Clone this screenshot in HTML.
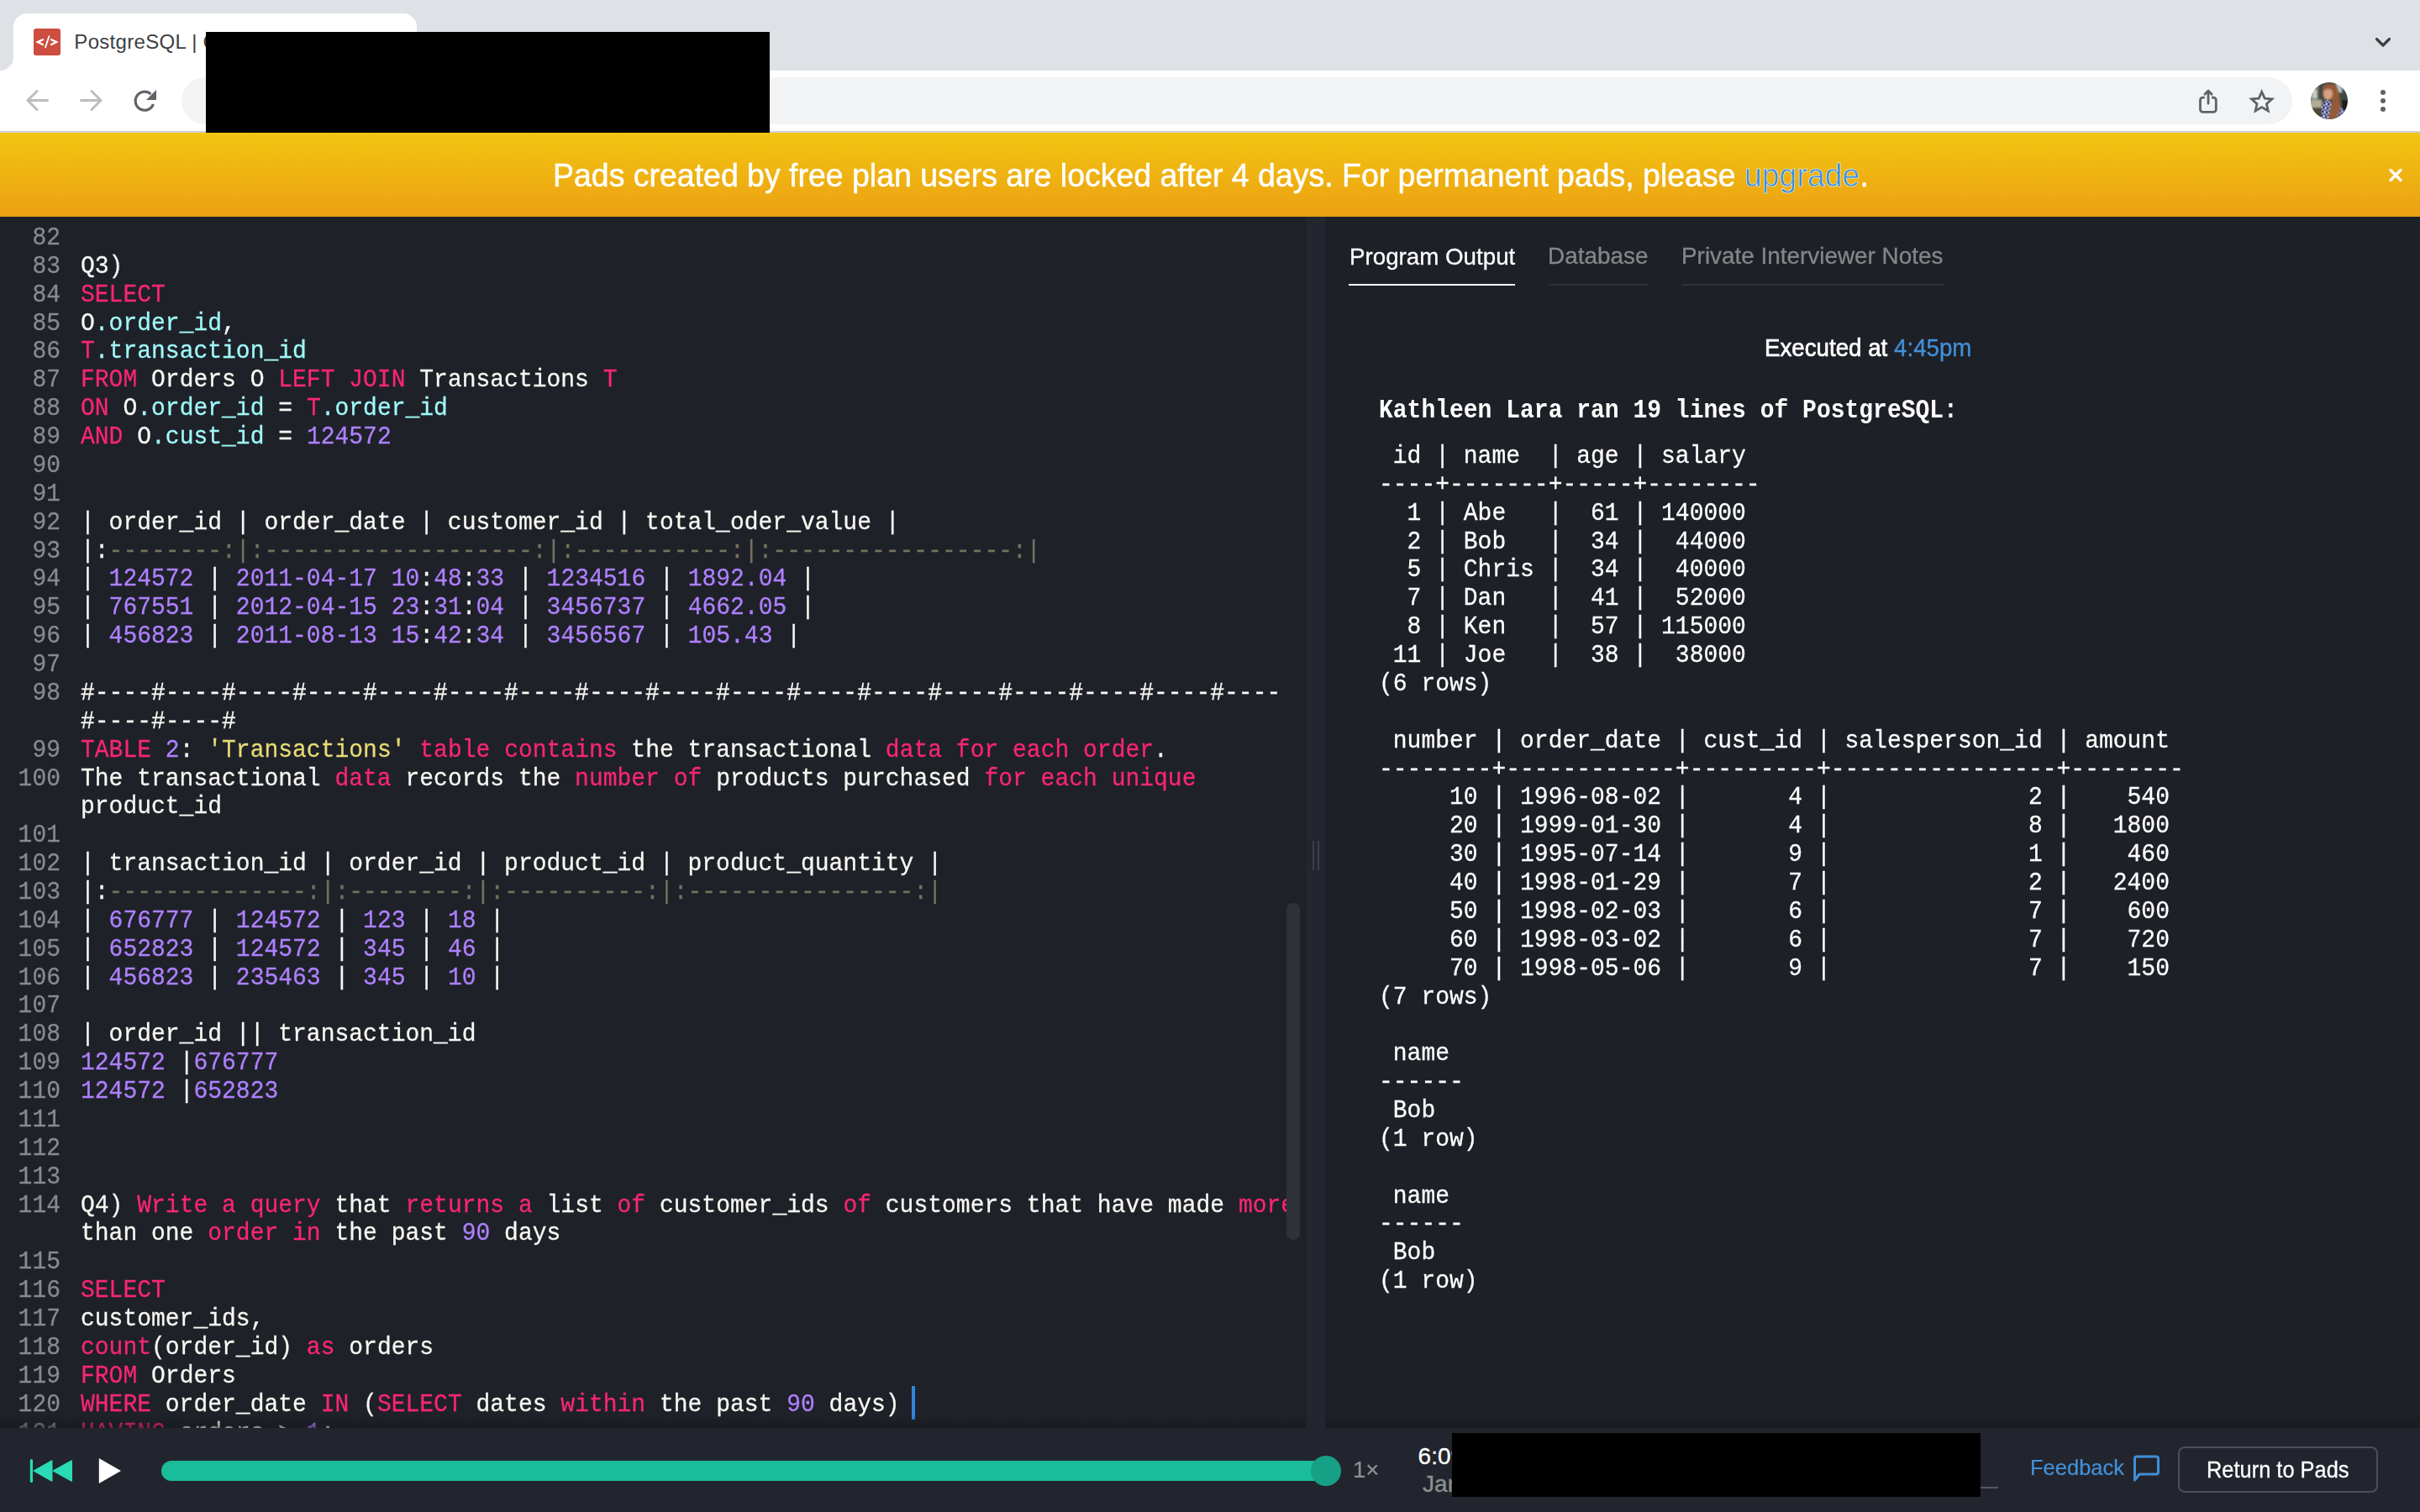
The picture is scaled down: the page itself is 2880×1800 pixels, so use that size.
<!DOCTYPE html>
<html><head><meta charset="utf-8">
<style>
*{margin:0;padding:0;box-sizing:border-box}
html,body{width:2880px;height:1800px;overflow:hidden;background:#1f2129}
body{position:relative;font-family:"Liberation Sans",sans-serif}
.a{position:absolute}
svg{position:absolute;overflow:visible}
/* chrome */
#strip{left:0;top:0;width:2880px;height:84px;background:#dee1e6}
#tab{left:16px;top:16px;width:480px;height:68px;background:#fff;border-radius:16px 16px 0 0}
#flw{left:0;top:60px;width:20px;height:24px;background:#fff}
#flg{left:0;top:0;width:16px;height:84px;background:#dee1e6;border-bottom-right-radius:16px}
#fav{left:40px;top:34px;width:32px;height:32px;background:#cd4d40;border-radius:3px}
#tabt{left:89px;top:30px;font-size:24px;line-height:36px;color:#3c4043;white-space:nowrap}
#tool{left:0;top:84px;width:2880px;height:72px;background:#fff}
#sep{left:0;top:156px;width:2880px;height:2px;background:#cfd1d5}
#omni{left:216px;top:92px;width:2512px;height:56px;background:#f1f3f4;border-radius:28px}
#avatar_unused{left:2750px;top:98px;width:44px;height:44px;border-radius:50%;overflow:hidden;
 background:radial-gradient(ellipse 9px 11px at 24px 17px,#d9a48a 0,#c98c6e 70%,transparent 100%),
 radial-gradient(ellipse 16px 22px at 25px 24px,#9a5a35 0,#7a4426 80%,transparent 100%),
 linear-gradient(90deg,#4a5b4c 0,#3d4a40 30%,#5a6a5e 60%,#2b3230 100%)}
#shirt_unused{left:2762px;top:128px;width:28px;height:16px;border-radius:40% 40% 0 0;background:repeating-linear-gradient(45deg,#233a7a 0 3px,#e8e8f0 3px 6px)}
.red{background:#000}
.sx{position:absolute;white-space:nowrap;transform-origin:0 0;line-height:1}
/* banner */
#banner{left:0;top:158px;width:2880px;height:100px;background:linear-gradient(#f2c512,#eca012)}
#btxt{left:0;top:0;width:2880px;height:100px;white-space:nowrap}
#btxt span.t{position:absolute;left:657px;top:35px;font-size:38px;line-height:44px;color:#fff;letter-spacing:0px}
#btxt .up{color:#3d8fd6}
/* editor */
#editor{left:0;top:258px;width:1555px;height:1442px;background:#1f2129;overflow:hidden}
#edin{left:0;top:-258px;width:1555px;height:1800px}
.r{position:absolute;left:0;height:34px;width:1555px;white-space:pre;font-family:"Liberation Mono",monospace;font-size:28px;line-height:34px;margin-top:-24px;transform:scaleY(1.08);transform-origin:0 24px;-webkit-text-stroke-width:0.25px}
.ln{position:absolute;right:1483px;color:#8a8a8c}
.cd{position:absolute;left:96px;color:#f8f8f2}
.k{color:#f92672}.w{color:#f8f8f2}.c{color:#9ff9f9}.n{color:#ae81ff}.s{color:#e6db74}.m{color:#75715e}
#cursor{left:1085px;top:1650px;width:4px;height:40px;background:#2e86de}
#edshade{left:0;top:1685px;width:1555px;height:15px;background:linear-gradient(rgba(20,22,26,0),rgba(20,22,26,.5))}
#thumb{left:1531px;top:1075px;width:16px;height:401px;border-radius:8px;background:#2e323a}
#split{left:1555px;top:258px;width:22px;height:1442px;background:#23262e}
.hl{top:1001px;width:2px;height:35px;background:#3b3f47}
/* output */
#outp{left:1577px;top:258px;width:1303px;height:1442px;background:#1e2027}
#outshade{left:1577px;top:1685px;width:1303px;height:15px;background:linear-gradient(rgba(20,22,26,0),rgba(20,22,26,.5))}
.tab{position:absolute;top:290px;font-size:30px;line-height:36px;white-space:nowrap}
.ul{position:absolute;top:338px;height:2px}
#exec{left:2098px;top:400px;font-size:27px;line-height:32px;color:#fff;white-space:nowrap}
#exec span{color:#3f8fd8}
#khead{left:1641px;top:496.7px;margin-top:-24px;transform:scaleY(1.14);transform-origin:0 24px;font-family:"Liberation Mono",monospace;font-weight:bold;font-size:28px;line-height:34px;color:#fff;white-space:pre}
.o{position:absolute;left:1641px;white-space:pre;font-family:"Liberation Mono",monospace;font-size:28px;line-height:34px;margin-top:-24px;color:#fff;transform:scaleY(1.08);transform-origin:0 24px;-webkit-text-stroke-width:0.25px}
/* player */
#player{left:0;top:1700px;width:2880px;height:100px;background:#22252d}
#prog{left:192px;top:1739px;width:1390px;height:24px;border-radius:12px;background:#1abc9c}
#knob{left:1560px;top:1733px;width:36px;height:36px;border-radius:50%;background:#16a085}
#speed{left:1610px;top:1734px;font-size:27px;line-height:32px;color:#8d8f92;white-space:nowrap}
#time{left:1687px;top:1717px;font-size:28px;line-height:32px;color:#fff;white-space:nowrap}
#date{left:1692px;top:1751px;font-size:28px;line-height:32px;color:#8d8f92;white-space:nowrap}
#tline{left:2357px;top:1770px;width:21px;height:2px;background:#525a63}
#fb{left:2417px;top:1732px;font-size:26px;line-height:32px;color:#3f8fd8;white-space:nowrap}
#btn{left:2592px;top:1722px;width:238px;height:55px;border:2px solid #4b5058;border-radius:8px}
#btnt{left:2625px;top:1733px;font-size:27px;line-height:32px;color:#fff;white-space:nowrap}
</style></head><body>
<div class="a" id="strip"></div>
<div class="a" id="flw"></div>
<div class="a" id="flg"></div>
<div class="a" id="tab"></div>
<div class="a" id="fav"></div>
<svg style="left:40px;top:34px" width="32" height="32" viewBox="0 0 32 32"><path d="M11.8 12.7 L4.8 16.1 L11.8 19.5 M20.2 12.7 L27.2 16.1 L20.2 19.5" fill="none" stroke="#fff" stroke-width="2.3" stroke-linecap="butt" stroke-linejoin="miter"/><path d="M18.4 9.3 L14 22.4" fill="none" stroke="#fff" stroke-width="1.9" stroke-linecap="round"/></svg>
<div class="sx" style="left:88.36px;top:37.95px;font-size:24.00px;transform:scaleX(1.0000);color:#3c4043;"><span style="letter-spacing:0.3px">PostgreSQL |</span> C</div>
<svg style="left:2820px;top:38px" width="32" height="24" viewBox="0 0 32 24"><path d="M8.5 8.5 L16 16 L23.5 8.5" fill="none" stroke="#3c4043" stroke-width="3.2" stroke-linecap="round" stroke-linejoin="round"/></svg>
<div class="a" id="tool"></div>
<div class="a" id="sep"></div>
<svg style="left:24px;top:100px" width="40" height="40" viewBox="0 0 40 40"><path d="M32.5 19.5 H9 M20 8.5 L9 19.5 L20 30.5" fill="none" stroke="#babcbe" stroke-width="3" stroke-linecap="round" stroke-linejoin="round"/></svg>
<svg style="left:88px;top:100px" width="40" height="40" viewBox="0 0 40 40"><path d="M8.5 19.5 H32 M21 8.5 L32 19.5 L21 30.5" fill="none" stroke="#babcbe" stroke-width="3" stroke-linecap="round" stroke-linejoin="round"/></svg>
<svg style="left:152px;top:100px" width="40" height="40" viewBox="0 0 40 40"><path d="M30.5 24 A11 11 0 1 1 27.5 12" fill="none" stroke="#5f6368" stroke-width="3.2"/><path d="M34 7 V19 H22 Z" fill="#5f6368"/></svg>
<div class="a" id="omni"></div>
<svg style="left:2608px;top:100px" width="40" height="40" viewBox="0 0 40 40"><path d="M15.8 16.2 H13.5 A3 3 0 0 0 10.5 19.2 V30.3 A3 3 0 0 0 13.5 33.3 H26.3 A3 3 0 0 0 29.3 30.3 V19.2 A3 3 0 0 0 26.3 16.2 H24" fill="none" stroke="#5f6368" stroke-width="2.8"/><path d="M20 23.2 V8.4 M15.9 12.2 L20 8.1 L24.1 12.2" fill="none" stroke="#5f6368" stroke-width="2.8" stroke-linecap="round" stroke-linejoin="round"/></svg>
<svg style="left:2671px;top:100.6px" width="40" height="40" viewBox="0 0 40 40"><g transform="translate(20.7 20.3) scale(0.93) translate(-20.5 -20.3)"><path d="M20.5 7.5 L24.3 15.8 L33.5 16.6 L26.6 22.8 L28.6 31.8 L20.5 27.1 L12.4 31.8 L14.4 22.8 L7.5 16.6 L16.7 15.8 Z" fill="none" stroke="#5f6368" stroke-width="3" stroke-linejoin="miter" stroke-miterlimit="3"/></g></svg>
<svg style="left:2750px;top:98px" width="44" height="44" viewBox="0 0 44 44"><defs><clipPath id="avc"><circle cx="22" cy="22" r="22"/></clipPath><pattern id="chk" width="5" height="5" patternUnits="userSpaceOnUse" patternTransform="rotate(12)"><rect width="5" height="5" fill="#d9d3e3"/><rect width="2.5" height="2.5" fill="#262b6a"/><rect x="2.5" y="2.5" width="2.5" height="2.5" fill="#3e4684"/><rect x="0" y="2.5" width="2.5" height="2.5" fill="#8a8fb8"/></pattern><filter id="bl"><feGaussianBlur stdDeviation="0.9"/></filter></defs>
<g clip-path="url(#avc)"><g filter="url(#bl)">
<rect x="-2" y="-2" width="48" height="48" fill="#3f4a44"/>
<rect x="0" y="4" width="9" height="20" fill="#7c857c"/>
<rect x="2" y="9" width="5" height="10" fill="#cfcfc4"/>
<rect x="0" y="21" width="13" height="9" fill="#b3ad96"/>
<ellipse cx="7" cy="40" rx="11" ry="10" fill="#4a4a37"/>
<rect x="30" y="0" width="7" height="12" fill="#b8c8c4"/>
<rect x="37" y="21" width="9" height="24" fill="#1c1c1c"/>
</g>
<path d="M12 46 L13 28 Q15 22 20 21 L24 23 L30 27 Q38 29 41 35 L42 46 Z" fill="url(#chk)"/>
<g filter="url(#bl)">
<path d="M15 4 Q22 -1 29 3 Q34 9 34 18 Q37 27 34 35 Q31 41 28 46 L21 46 Q22 36 24 28 Q26 24 25 20 L16 20 Q13 12 15 4 Z" fill="#935a37"/>
<ellipse cx="20.5" cy="13.5" rx="5.5" ry="7.5" fill="#d8a083"/>
<path d="M14 6 Q20 1 27 5 L27 10 Q21 6 15 10 Z" fill="#935a37"/>
</g></g></svg>
<svg style="left:2826px;top:100px" width="20" height="40" viewBox="0 0 20 40"><circle cx="10" cy="10" r="3" fill="#5f6368"/><circle cx="10" cy="20" r="3" fill="#5f6368"/><circle cx="10" cy="30" r="3" fill="#5f6368"/></svg>
<div class="a red" style="left:245px;top:38px;width:671px;height:120px"></div>

<div class="a" id="banner"></div><div class="sx" style="left:658.02px;top:189.56px;font-size:38.50px;transform:scaleX(0.9729);color:#fff;-webkit-text-stroke:0.50px #fff;">Pads created by free plan users are locked after 4 days. For permanent pads, please <span style="color:#3d8fd6">upgrade</span>.</div>
<svg style="left:2836px;top:193px" width="30" height="30" viewBox="0 0 30 30"><path d="M9 9.5 L21 21.5 M21 9.5 L9 21.5" fill="none" stroke="#fff" stroke-width="3.4" stroke-linecap="round"/></svg>

<div class="a" id="editor"><div class="a" id="edin">
<div class="r" style="top:291.00px"><span class="ln">82</span><span class="cd"></span></div>
<div class="r" style="top:324.87px"><span class="ln">83</span><span class="cd"><span class="w">Q3)</span></span></div>
<div class="r" style="top:358.74px"><span class="ln">84</span><span class="cd"><span class="k">SELECT</span></span></div>
<div class="r" style="top:392.61px"><span class="ln">85</span><span class="cd"><span class="w">O</span><span class="c">.order_id</span><span class="w">,</span></span></div>
<div class="r" style="top:426.48px"><span class="ln">86</span><span class="cd"><span class="k">T</span><span class="c">.transaction_id</span></span></div>
<div class="r" style="top:460.35px"><span class="ln">87</span><span class="cd"><span class="k">FROM</span><span class="w"> Orders O </span><span class="k">LEFT JOIN</span><span class="w"> Transactions </span><span class="k">T</span></span></div>
<div class="r" style="top:494.22px"><span class="ln">88</span><span class="cd"><span class="k">ON</span><span class="w"> O</span><span class="c">.order_id</span><span class="w"> = </span><span class="k">T</span><span class="c">.order_id</span></span></div>
<div class="r" style="top:528.09px"><span class="ln">89</span><span class="cd"><span class="k">AND</span><span class="w"> O</span><span class="c">.cust_id</span><span class="w"> = </span><span class="n">124572</span></span></div>
<div class="r" style="top:561.96px"><span class="ln">90</span><span class="cd"></span></div>
<div class="r" style="top:595.83px"><span class="ln">91</span><span class="cd"></span></div>
<div class="r" style="top:629.70px"><span class="ln">92</span><span class="cd"><span class="w">| order_id | order_date | customer_id | total_oder_value |</span></span></div>
<div class="r" style="top:663.57px"><span class="ln">93</span><span class="cd"><span class="w">|:</span><span class="m">--------:|:-------------------:|:-----------:|:-----------------:|</span></span></div>
<div class="r" style="top:697.44px"><span class="ln">94</span><span class="cd"><span class="w">| </span><span class="n">124572</span><span class="w"> | </span><span class="n">2011-04-17</span><span class="w"> </span><span class="n">10</span><span class="w">:</span><span class="n">48</span><span class="w">:</span><span class="n">33</span><span class="w"> | </span><span class="n">1234516</span><span class="w"> | </span><span class="n">1892.04</span><span class="w"> |</span></span></div>
<div class="r" style="top:731.31px"><span class="ln">95</span><span class="cd"><span class="w">| </span><span class="n">767551</span><span class="w"> | </span><span class="n">2012-04-15</span><span class="w"> </span><span class="n">23</span><span class="w">:</span><span class="n">31</span><span class="w">:</span><span class="n">04</span><span class="w"> | </span><span class="n">3456737</span><span class="w"> | </span><span class="n">4662.05</span><span class="w"> |</span></span></div>
<div class="r" style="top:765.18px"><span class="ln">96</span><span class="cd"><span class="w">| </span><span class="n">456823</span><span class="w"> | </span><span class="n">2011-08-13</span><span class="w"> </span><span class="n">15</span><span class="w">:</span><span class="n">42</span><span class="w">:</span><span class="n">34</span><span class="w"> | </span><span class="n">3456567</span><span class="w"> | </span><span class="n">105.43</span><span class="w"> |</span></span></div>
<div class="r" style="top:799.05px"><span class="ln">97</span><span class="cd"></span></div>
<div class="r" style="top:832.92px"><span class="ln">98</span><span class="cd"><span class="w">#----#----#----#----#----#----#----#----#----#----#----#----#----#----#----#----#----</span></span></div>
<div class="r" style="top:866.79px"><span class="ln"></span><span class="cd"><span class="w">#----#----#</span></span></div>
<div class="r" style="top:900.66px"><span class="ln">99</span><span class="cd"><span class="k">TABLE</span><span class="w"> </span><span class="n">2</span><span class="w">: </span><span class="s">&#x27;Transactions&#x27;</span><span class="w"> </span><span class="k">table contains</span><span class="w"> the transactional </span><span class="k">data for each order</span><span class="w">.</span></span></div>
<div class="r" style="top:934.53px"><span class="ln">100</span><span class="cd"><span class="w">The transactional </span><span class="k">data</span><span class="w"> records the </span><span class="k">number of</span><span class="w"> products purchased </span><span class="k">for each unique</span></span></div>
<div class="r" style="top:968.40px"><span class="ln"></span><span class="cd"><span class="w">product_id</span></span></div>
<div class="r" style="top:1002.27px"><span class="ln">101</span><span class="cd"></span></div>
<div class="r" style="top:1036.14px"><span class="ln">102</span><span class="cd"><span class="w">| transaction_id | order_id | product_id | product_quantity |</span></span></div>
<div class="r" style="top:1070.01px"><span class="ln">103</span><span class="cd"><span class="w">|:</span><span class="m">--------------:|:--------:|:----------:|:----------------:|</span></span></div>
<div class="r" style="top:1103.88px"><span class="ln">104</span><span class="cd"><span class="w">| </span><span class="n">676777</span><span class="w"> | </span><span class="n">124572</span><span class="w"> | </span><span class="n">123</span><span class="w"> | </span><span class="n">18</span><span class="w"> |</span></span></div>
<div class="r" style="top:1137.75px"><span class="ln">105</span><span class="cd"><span class="w">| </span><span class="n">652823</span><span class="w"> | </span><span class="n">124572</span><span class="w"> | </span><span class="n">345</span><span class="w"> | </span><span class="n">46</span><span class="w"> |</span></span></div>
<div class="r" style="top:1171.62px"><span class="ln">106</span><span class="cd"><span class="w">| </span><span class="n">456823</span><span class="w"> | </span><span class="n">235463</span><span class="w"> | </span><span class="n">345</span><span class="w"> | </span><span class="n">10</span><span class="w"> |</span></span></div>
<div class="r" style="top:1205.49px"><span class="ln">107</span><span class="cd"></span></div>
<div class="r" style="top:1239.36px"><span class="ln">108</span><span class="cd"><span class="w">| order_id || transaction_id</span></span></div>
<div class="r" style="top:1273.23px"><span class="ln">109</span><span class="cd"><span class="n">124572</span><span class="w"> |</span><span class="n">676777</span></span></div>
<div class="r" style="top:1307.10px"><span class="ln">110</span><span class="cd"><span class="n">124572</span><span class="w"> |</span><span class="n">652823</span></span></div>
<div class="r" style="top:1340.97px"><span class="ln">111</span><span class="cd"></span></div>
<div class="r" style="top:1374.84px"><span class="ln">112</span><span class="cd"></span></div>
<div class="r" style="top:1408.71px"><span class="ln">113</span><span class="cd"></span></div>
<div class="r" style="top:1442.58px"><span class="ln">114</span><span class="cd"><span class="w">Q4) </span><span class="k">Write a query</span><span class="w"> that </span><span class="k">returns a</span><span class="w"> list </span><span class="k">of</span><span class="w"> customer_ids </span><span class="k">of</span><span class="w"> customers that have made </span><span class="k">more</span></span></div>
<div class="r" style="top:1476.45px"><span class="ln"></span><span class="cd"><span class="w">than one </span><span class="k">order in</span><span class="w"> the past </span><span class="n">90</span><span class="w"> days</span></span></div>
<div class="r" style="top:1510.32px"><span class="ln">115</span><span class="cd"></span></div>
<div class="r" style="top:1544.19px"><span class="ln">116</span><span class="cd"><span class="k">SELECT</span></span></div>
<div class="r" style="top:1578.06px"><span class="ln">117</span><span class="cd"><span class="w">customer_ids,</span></span></div>
<div class="r" style="top:1611.93px"><span class="ln">118</span><span class="cd"><span class="k">count</span><span class="w">(order_id) </span><span class="k">as</span><span class="w"> orders</span></span></div>
<div class="r" style="top:1645.80px"><span class="ln">119</span><span class="cd"><span class="k">FROM</span><span class="w"> Orders</span></span></div>
<div class="r" style="top:1679.67px"><span class="ln">120</span><span class="cd"><span class="k">WHERE</span><span class="w"> order_date </span><span class="k">IN</span><span class="w"> (</span><span class="k">SELECT</span><span class="w"> dates </span><span class="k">within</span><span class="w"> the past </span><span class="n">90</span><span class="w"> days) </span></span></div>
<div class="r" style="top:1713.54px"><span class="ln">121</span><span class="cd"><span class="k">HAVING</span><span class="w"> orders &gt; </span><span class="n">1</span><span class="w">;</span></span></div>

<div class="a" id="cursor"></div>
<div class="a" id="edshade"></div>
<div class="a" id="thumb"></div>
</div></div>
<div class="a" id="split"></div>
<div class="a hl" style="left:1562px"></div>
<div class="a hl" style="left:1568px"></div>

<div class="a" id="outp"></div>
<div class="a" id="outshade"></div>
<div class="sx" style="left:1605.60px;top:291.31px;font-size:28.30px;transform:scaleX(0.9801);color:#fff;-webkit-text-stroke:0.30px #fff;">Program Output</div>
<div class="ul" style="left:1605px;width:198px;background:#fff"></div>
<div class="sx" style="left:1842.35px;top:289.66px;font-size:28.30px;transform:scaleX(0.9858);color:#858688;-webkit-text-stroke:0.30px #858688;">Database</div>
<div class="ul" style="left:1843px;width:119px;background:#2c313a"></div>
<div class="sx" style="left:2000.95px;top:289.66px;font-size:28.30px;transform:scaleX(0.9852);color:#858688;-webkit-text-stroke:0.30px #858688;">Private Interviewer Notes</div>
<div class="ul" style="left:2002px;width:312px;background:#2c313a"></div>
<div class="sx" style="left:2099.95px;top:400.42px;font-size:29.20px;transform:scaleX(0.9492);color:#fff;"><span style="-webkit-text-stroke:0.7px #fff">Executed at</span> <span style="color:#4290d8;-webkit-text-stroke:0.3px #4290d8">4:45pm</span></div>
<div class="a" id="khead">Kathleen Lara ran 19 lines of PostgreSQL:</div>
<div class="o" style="top:551.00px"> id | name  | age | salary </div>
<div class="o" style="top:584.87px">----+-------+-----+--------</div>
<div class="o" style="top:618.74px">  1 | Abe   |  61 | 140000</div>
<div class="o" style="top:652.61px">  2 | Bob   |  34 |  44000</div>
<div class="o" style="top:686.48px">  5 | Chris |  34 |  40000</div>
<div class="o" style="top:720.35px">  7 | Dan   |  41 |  52000</div>
<div class="o" style="top:754.22px">  8 | Ken   |  57 | 115000</div>
<div class="o" style="top:788.09px"> 11 | Joe   |  38 |  38000</div>
<div class="o" style="top:821.96px">(6 rows)</div>
<div class="o" style="top:889.70px"> number | order_date | cust_id | salesperson_id | amount </div>
<div class="o" style="top:923.57px">--------+------------+---------+----------------+--------</div>
<div class="o" style="top:957.44px">     10 | 1996-08-02 |       4 |              2 |    540</div>
<div class="o" style="top:991.31px">     20 | 1999-01-30 |       4 |              8 |   1800</div>
<div class="o" style="top:1025.18px">     30 | 1995-07-14 |       9 |              1 |    460</div>
<div class="o" style="top:1059.05px">     40 | 1998-01-29 |       7 |              2 |   2400</div>
<div class="o" style="top:1092.92px">     50 | 1998-02-03 |       6 |              7 |    600</div>
<div class="o" style="top:1126.79px">     60 | 1998-03-02 |       6 |              7 |    720</div>
<div class="o" style="top:1160.66px">     70 | 1998-05-06 |       9 |              7 |    150</div>
<div class="o" style="top:1194.53px">(7 rows)</div>
<div class="o" style="top:1262.27px"> name </div>
<div class="o" style="top:1296.14px">------</div>
<div class="o" style="top:1330.01px"> Bob</div>
<div class="o" style="top:1363.88px">(1 row)</div>
<div class="o" style="top:1431.62px"> name </div>
<div class="o" style="top:1465.49px">------</div>
<div class="o" style="top:1499.36px"> Bob</div>
<div class="o" style="top:1533.23px">(1 row)</div>


<div class="a" id="player"></div>
<svg style="left:30px;top:1730px" width="64" height="42" viewBox="0 0 64 42"><rect x="5.8" y="7" width="3.2" height="28" rx="1.6" fill="#2adbb5"/><path d="M9 21 L31 8.5 Q32.5 7.8 32.5 9.5 V32.5 Q32.5 34.2 31 33.5 Z" fill="#2adbb5"/><path d="M32 21 L54.5 8.5 Q56 7.8 56 9.5 V32.5 Q56 34.2 54.5 33.5 Z" fill="#2adbb5"/></svg>
<svg style="left:110px;top:1730px" width="40" height="42" viewBox="0 0 40 42"><path d="M7.8 6 L34 21 L7.8 36 Z" fill="#fff"/></svg>
<div class="a" id="prog"></div>
<div class="a" id="knob"></div>
<div class="sx" style="left:1609.98px;top:1737.02px;font-size:27.00px;transform:scaleX(1.0193);color:#8d8f92;-webkit-text-stroke:0.20px #8d8f92;">1×</div>
<div class="sx" style="left:1687.62px;top:1719.61px;font-size:28.00px;transform:scaleX(1.0000);color:#fff;-webkit-text-stroke:0.30px #fff;">6:09</div>
<div class="sx" style="left:1693.12px;top:1752.56px;font-size:28.00px;transform:scaleX(1.0000);color:#8d8f92;-webkit-text-stroke:0.30px #8d8f92;">Jan</div>
<div class="a red" style="left:1728px;top:1706px;width:629px;height:76px"></div>
<div class="a" id="tline"></div>
<div class="sx" style="left:2416.32px;top:1734.03px;font-size:26.30px;transform:scaleX(0.9700);color:#4290d8;-webkit-text-stroke:0.20px #4290d8;">Feedback</div>
<svg style="left:2534px;top:1728px" width="40" height="40" viewBox="0 0 40 40"><path d="M6.5 34 V8.5 A2.5 2.5 0 0 1 9 6 H32 A2.5 2.5 0 0 1 34.5 8.5 V24.5 A2.5 2.5 0 0 1 32 27 H12 Z" fill="none" stroke="#3f8fd8" stroke-width="3" stroke-linejoin="round"/></svg>
<div class="a" id="btn"></div>
<div class="sx" style="left:2626.24px;top:1735.53px;font-size:27.60px;transform:scaleX(0.9209);color:#fff;-webkit-text-stroke:0.30px #fff;">Return to Pads</div>
</body></html>
